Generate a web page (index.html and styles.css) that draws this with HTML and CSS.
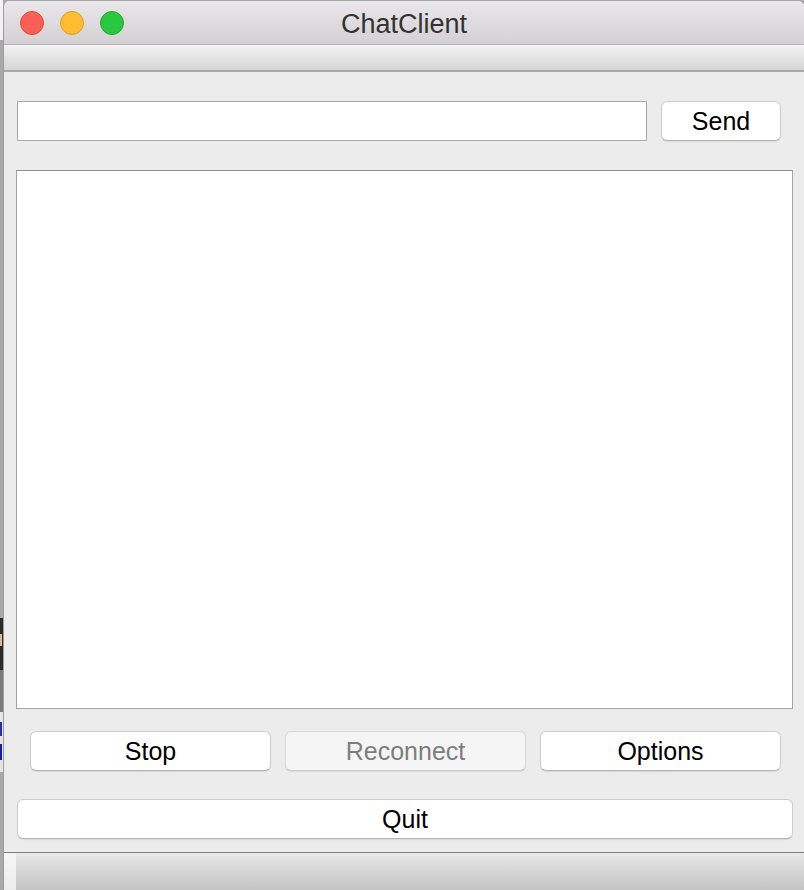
FILE: index.html
```html
<!DOCTYPE html>
<html>
<head>
<meta charset="utf-8">
<title>ChatClient</title>
<link rel="stylesheet" href="styles.css">
</head>
<body>
<div class="desk">
  <div class="strip">
    <div class="seg seg-a"></div>
    <div class="seg seg-b"><span class="mark mark-t"></span></div>
    <div class="seg seg-c"></div>
    <div class="seg seg-d"><span class="mark mark-v"></span><span class="mark mark-q"></span></div>
    <div class="seg seg-e"></div>
  </div>
  <div class="window">
    <div class="titlebar">
      <div class="lights">
        <span class="light red"></span>
        <span class="light yellow"></span>
        <span class="light green"></span>
      </div>
      <div class="title">ChatClient</div>
    </div>
    <div class="toolbar"></div>
    <div class="content">
      <div class="send-row">
        <input class="msg" type="text">
        <button class="btn send">Send</button>
      </div>
      <div class="log"></div>
      <div class="actions">
        <button class="btn act">Stop</button>
        <button class="btn act" disabled>Reconnect</button>
        <button class="btn act">Options</button>
      </div>
      <button class="btn quit">Quit</button>
    </div>
    <div class="statusbar"><div class="status-left"></div></div>
  </div>
</div>
</body>
</html>
```

FILE: styles.css
```css
html, body {
  margin: 0;
  padding: 0;
  height: 890px;
  overflow: hidden;
  background: #a8a8a8;
  font-family: "Liberation Sans", Arial, sans-serif;
}

.desk {
  display: flex;
  height: 890px;
}

.strip {
  width: 3px;
  display: flex;
  flex-direction: column;
  overflow: hidden;
}
.seg { width: 3px; display: flex; flex-direction: column; }
.seg-a { height: 618px; background: linear-gradient(#f2f2f2 0 40px, #a9a9a9 40px); }
.seg-b { height: 52px; background: #2b2b2b; }
.seg-c { height: 42px; background: #7b7b7b; }
.seg-d { height: 60px; background: #e6e6e6; }
.seg-e { flex: 1; background: #a9a9a9; }
.mark { display: block; width: 2px; }
.mark-t { height: 12px; margin-top: 16px; background: #cdbf9f; }
.mark-v { height: 14px; margin-top: 10px; background: #2a2ab0; }
.mark-q { height: 16px; margin-top: 8px; background: #1c1c9c; }

.window {
  flex: 1;
  display: flex;
  flex-direction: column;
  background: #ececec;
  border-left: 1px solid #9c9c9c;
  margin-top: 1px;
  border-top-left-radius: 6px;
  border-top-right-radius: 6px;
  overflow: hidden;
}

.titlebar {
  height: 43px;
  flex: none;
  position: relative;
  display: flex;
  align-items: center;
  justify-content: center;
  background: linear-gradient(#e9e7e9, #d3d1d3);
  border-bottom: 1px solid #b3b3b3;
}

.lights {
  position: absolute;
  left: 16px;
  top: 10px;
  display: flex;
  gap: 16px;
}
.light {
  width: 22px;
  height: 22px;
  border-radius: 50%;
  border: 1px solid;
}
.red { background: #fd5f57; border-color: #df4740; }
.yellow { background: #febc2e; border-color: #dca022; }
.green { background: #29c840; border-color: #1ca92d; }

.title {
  font-size: 27px;
  color: #333;
  margin-top: 3px;
}

.toolbar {
  height: 24px;
  flex: none;
  background: linear-gradient(#f1f1f1, #d5d5d5);
  border-top: 1px solid #f6f6f6;
  border-bottom: 2px solid #a9a9a9;
}

.content {
  flex: 1;
  display: flex;
  flex-direction: column;
  padding: 29px 10px 13px 12px;
  border-bottom: 1px solid #7c7c7c;
}

.send-row {
  display: flex;
  gap: 14px;
  height: 40px;
  margin-left: 1px;
}

.msg {
  width: 630px;
  height: 40px;
  box-sizing: border-box;
  border: 1px solid #a9a9a9;
  background: #fff;
  margin: 0;
  padding: 0 6px;
  outline: none;
}

.btn {
  box-sizing: border-box;
  height: 40px;
  margin: 0;
  padding: 0;
  background: #fff;
  border: 1px solid #cdcdcd;
  border-bottom-color: #b4b4b4;
  border-radius: 6px;
  box-shadow: 0 1px 1px rgba(0, 0, 0, 0.08);
  font-family: "Liberation Sans", Arial, sans-serif;
  font-size: 25px;
  color: #000;
}

.send { width: 120px; }

.log {
  margin-top: 29px;
  width: 777px;
  height: 539px;
  box-sizing: border-box;
  background: #fff;
  border: 1px solid #a3a3a3;
  border-top-color: #8e8e8e;
}

.actions {
  display: flex;
  gap: 14px;
  margin-top: 22px;
  margin-left: 14px;
}
.act { width: 241px; }
.act:disabled {
  background: #f5f5f5;
  color: #7d7d7d;
  border-color: #d9d9d9;
  border-bottom-color: #c9c9c9;
}

.quit {
  margin-top: 28px;
  margin-left: 1px;
  width: 776px;
}

.statusbar {
  height: 38px;
  flex: none;
  display: flex;
  background: linear-gradient(#e7e7e7, #c3c3c3);
}
.status-left {
  width: 12px;
  background: linear-gradient(#f5f5f5, #ececec);
}
```
